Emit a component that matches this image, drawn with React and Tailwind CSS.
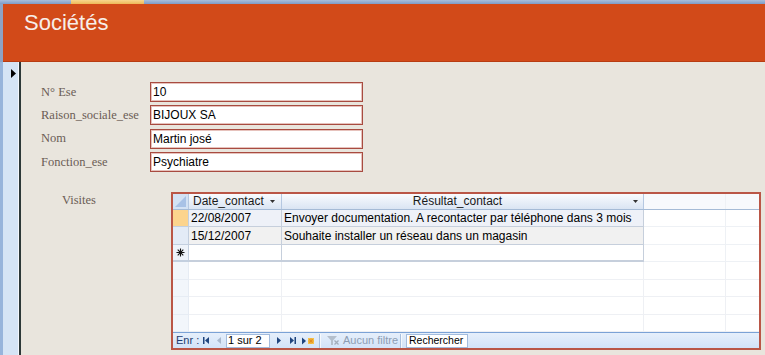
import React from "react";

const sans = "font-['Liberation_Sans',Arial,sans-serif]";
const serif = "font-['Liberation_Serif','Times_New_Roman',serif]";

const fields = [
  ["N° Ese", "10"],
  ["Raison_sociale_ese", "BIJOUX SA"],
  ["Nom", "Martin josé"],
  ["Fonction_ese", "Psychiatre"],
];

const visites = [
  { date: "22/08/2007", result: "Envoyer documentation. A recontacter par téléphone dans 3 mois", current: true },
  { date: "15/12/2007", result: "Souhaite installer un réseau dans un magasin" },
];

function DropArrow() {
  return (
    <svg width="5" height="3" viewBox="0 0 5 3">
      <polygon points="0,0 5,0 2.5,3" fill="#333" />
    </svg>
  );
}

function NavBar() {
  return (
    <div className={`h-[16px] flex items-center pl-[3px] border-t border-[#7BA2D6] bg-gradient-to-b from-[#E6EFFB] to-[#D2E3F8] text-[11px] ${sans}`}>
      <span className="w-[27px] text-[#1D3C6E] leading-none">Enr :</span>
      <svg width="6" height="7" viewBox="0 0 6 7">
        <rect x="0" y="0" width="1.5" height="7" fill="#1F447E" />
        <polygon points="6,0 6,7 2,3.5" fill="#1F447E" />
      </svg>
      <svg className="ml-[8px]" width="4" height="7" viewBox="0 0 4 7">
        <polygon points="4,0 4,7 0,3.5" fill="#A9B9CE" />
      </svg>
      <div className="ml-[5px] w-[44px] h-[14px] bg-white border border-[#A3BCDD] flex items-center pl-[1px] leading-none text-black">
        1 sur 2
      </div>
      <svg className="ml-[7px]" width="4" height="7" viewBox="0 0 4 7">
        <polygon points="0,0 0,7 4,3.5" fill="#1F447E" />
      </svg>
      <svg className="ml-[9px]" width="6" height="7" viewBox="0 0 6 7">
        <polygon points="0,0 0,7 4,3.5" fill="#1F447E" />
        <rect x="4.5" y="0" width="1.5" height="7" fill="#1F447E" />
      </svg>
      <svg className="ml-[6px]" width="12" height="8" viewBox="0 0 12 8">
        <polygon points="0,0.5 0,7.5 4,4" fill="#1F447E" />
        <rect x="6" y="1" width="6" height="6" fill="#F5C24A" />
        <path d="M9 1.5v5M6.5 4h5M7.2 2.2l3.6 3.6M10.8 2.2l-3.6 3.6" stroke="#E08A1E" strokeWidth="0.9" />
      </svg>
      <div className="ml-[5px] w-[2px] h-[14px] border-l border-[#A9C0DE] bg-white/70" />
      <svg className="ml-[5px]" width="14" height="11" viewBox="0 0 14 11">
        <polygon points="1,1 11,1 7,5.5 7,10 5,10 5,5.5" fill="#B4BFCC" />
        <path d="M8.5 5.5l4 4M12.5 5.5l-4 4" stroke="#A2ADBB" strokeWidth="1.3" />
      </svg>
      <span className="ml-[3px] w-[55px] text-[#8D9DB3] leading-none whitespace-nowrap">Aucun filtre</span>
      <div className="ml-[2px] w-[2px] h-[14px] border-l border-[#A9C0DE] bg-white/70" />
      <div className="ml-[4px] w-[62px] h-[14px] bg-white border border-[#A3BCDD] flex items-center pl-[2px] leading-none text-black text-[10.5px]">
        Rechercher
      </div>
    </div>
  );
}

function Subform() {
  const emptyRows = [0, 1, 2, 3];
  return (
    <div className={`w-[590px] h-[158px] border-2 border-[#BA5646] bg-white flex flex-col text-[12px] ${sans}`}>
      {/* header */}
      <div className="h-[16px] flex shrink-0 border-b border-[#A5BBD6]">
        <div className="w-[16px] bg-[#D3E2F4] border-r border-[#B5C8E1] flex items-end justify-end p-[2px]">
          <svg width="11" height="11" viewBox="0 0 11 11">
            <polygon points="11,0 11,11 0,11" fill="#A8C2E6" />
          </svg>
        </div>
        <div className="w-[93px] bg-gradient-to-b from-[#F9FBFE] to-[#DAE5F3] border-r border-[#B5C8E1] flex items-center justify-between pl-[4px] pr-[6px] leading-none text-[#1A1A1A]">
          <span>Date_contact</span>
          <DropArrow />
        </div>
        <div className="w-[362px] bg-gradient-to-b from-[#F9FBFE] to-[#DAE5F3] border-r border-[#B5C8E1] flex items-center pr-[5px] leading-none text-[#1A1A1A]">
          <span className="flex-1 text-center">Résultat_contact</span>
          <DropArrow />
        </div>
        <div className="w-[82px] bg-[#F7F9FC] border-r border-[#EEF1F5]" />
        <div className="flex-1 bg-[#F7F9FC]" />
      </div>
      {/* rows */}
      {visites.map((v) => (
        <div key={v.date} className="h-[17.5px] flex shrink-0">
          <div className={`w-[16px] border-r border-b border-[#C3CFDF] ${v.current ? "bg-[#FCD48D]" : "bg-[#E3EBF6]"}`} />
          <div className={`w-[93px] border-r border-b border-[#C6CFDC] flex items-center pl-[2px] leading-none ${v.current ? "bg-[#EEF1F8]" : "bg-[#F1F1F1]"}`}>
            {v.date}
          </div>
          <div className={`w-[362px] border-r border-b border-[#C6CFDC] flex items-center pl-[2px] leading-none whitespace-nowrap overflow-hidden ${v.current ? "bg-[#EEF1F8]" : "bg-[#F1F1F1]"}`}>
            {v.result}
          </div>
          <div className="w-[82px] border-r border-b border-[#EEF1F5]" />
          <div className="flex-1 border-b border-[#EEF1F5]" />
        </div>
      ))}
      <div className="h-[17.5px] flex shrink-0">
        <div className="w-[16px] border-r border-b-2 border-[#C3CFDF] bg-[#EEF3FA] flex items-center justify-center">
          <svg width="9" height="9" viewBox="0 0 9 9">
            <path d="M4.5 0.5v8M0.5 4.5h8M1.7 1.7l5.6 5.6M7.3 1.7l-5.6 5.6" stroke="#111" strokeWidth="1.1" />
          </svg>
        </div>
        <div className="w-[93px] border-r border-b-2 border-[#C6CFDC]" />
        <div className="w-[362px] border-r border-b-2 border-[#C6CFDC]" />
        <div className="w-[82px] border-r border-b border-[#EEF1F5]" />
        <div className="flex-1 border-b border-[#EEF1F5]" />
      </div>
      {emptyRows.map((i) => (
        <div key={i} className="h-[17.5px] flex shrink-0">
          <div className="w-[16px] border-r border-b border-[#E6ECF4] bg-[#F2F6FB]" />
          <div className="w-[93px] border-r border-b border-[#EEF0F4]" />
          <div className="w-[362px] border-r border-b border-[#EEF0F4]" />
          <div className="w-[82px] border-r border-b border-[#EEF0F4]" />
          <div className="flex-1 border-b border-[#EEF0F4]" />
        </div>
      ))}
      <div className="flex-1" />
      <NavBar />
    </div>
  );
}

export default function App() {
  return (
    <div className="w-[765px] h-[355px] overflow-hidden flex flex-col bg-[#E9E5DD]">
      {/* top strip with active tab */}
      <div className="h-[4px] flex shrink-0">
        <div className="w-[71px] bg-gradient-to-b from-[#A9BEDC] to-[#7F9BC6]" />
        <div className="w-[73px] bg-gradient-to-b from-[#F8D68E] to-[#EDB857]" />
        <div className="flex-1 bg-gradient-to-b from-[#A9BEDC] to-[#7F9BC6]" />
      </div>

      {/* form header */}
      <div className="h-[58px] flex shrink-0">
        <div className="w-[3px] bg-[#8EA3C4]" />
        <div className={`flex-1 bg-[#D24A19] border-b border-[#B83C12] pl-[21px] pt-[8px] text-[22px] leading-[22px] text-[#F7EEE9] ${sans}`}>
          Sociétés
        </div>
      </div>

      {/* detail */}
      <div className="flex flex-1 min-h-0">
        <div className="w-[21px] flex shrink-0">
          <div className="w-[3px] bg-[#97B4DB]" />
          <div className="w-[15px] bg-[#D5E4F5] flex flex-col">
            <div className="h-[16px] flex items-end justify-end pr-[2px]">
              <svg width="5" height="9" viewBox="0 0 5 9">
                <polygon points="0,0 0,9 5,4.5" fill="#000" />
              </svg>
            </div>
          </div>
          <div className="w-[1px] bg-[#F3F7FC]" />
          <div className="w-[2px] bg-[#2D3838]" />
        </div>

        <div className="flex-1 pt-[20px]">
          <div className="flex flex-col gap-[3.33px]">
            {fields.map(([label, value]) => (
              <div key={label} className="flex items-center h-[20px]">
                <div className={`w-[129px] pl-[20px] text-[12.5px] leading-none text-[#6B5D55] ${serif}`}>{label}</div>
                <div className={`w-[213px] h-[20px] bg-white border border-[#A84B40] shadow-[inset_0_0_0_1px_#E6C2BC] flex items-center pl-[2px] text-[12px] leading-none text-black ${sans}`}>
                  {value}
                </div>
              </div>
            ))}
          </div>

          <div className="flex mt-[20px]">
            <div className={`w-[150px] pl-[41px] text-[12.5px] leading-[16px] text-[#6B5D55] ${serif}`}>Visites</div>
            <Subform />
          </div>
        </div>
      </div>
    </div>
  );
}
